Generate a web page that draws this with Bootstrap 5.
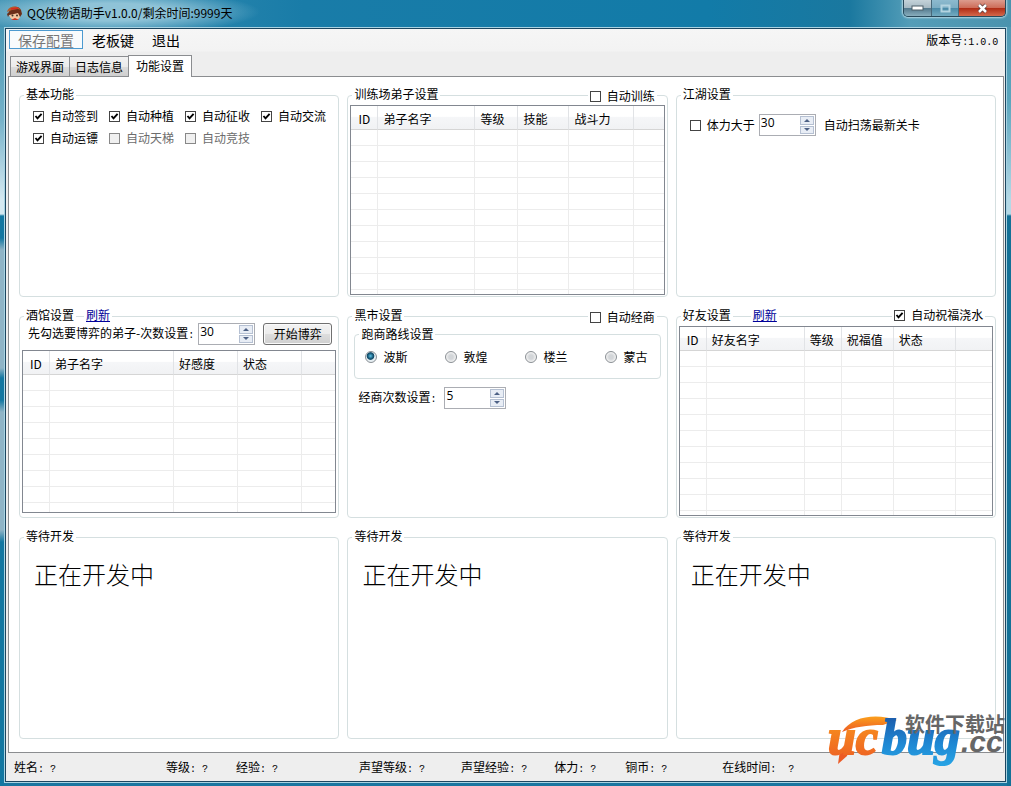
<!DOCTYPE html>
<html lang="zh-CN">
<head>
<meta charset="utf-8">
<meta name="viewport" content="width=device-width, initial-scale=1">
<title>QQ侠物语助手</title>
<link href="https://cdn.jsdelivr.net/npm/bootstrap@5.3.0/dist/css/bootstrap.min.css" rel="stylesheet">
<style>
body{font-family:"Noto Sans CJK SC",sans-serif;font-size:12px;line-height:16px;color:#000;background:#1a76a0}
.app-window{min-height:100vh;padding:0 4px 3px;
  background:
    linear-gradient(#5aa5c0,#4a98b5 30px,#76b2c9 120px,#d5e9f1 200px,#d5e9f1 214px,#1377a1 216px,#1377a1 238px,#8fb4c6 250px,#8fb4c6 368px,#1377a1 378px,#1377a1 400px,#8fb4c6 412px,#8fb4c6 530px,#1377a1 542px) left/4px 100% no-repeat,
    linear-gradient(#4d96b1,#5ba5bd 100px,#b4d8e6 200px,#b4d8e6 214px,#147197 216px) right/4px 100% no-repeat,
    #1a76a0}
.title-bar{height:27px;margin:0 -4px;padding-left:6px;
  background:radial-gradient(ellipse 150px 22px at 110px 12px,#8fc3d7 40%,transparent),linear-gradient(90deg,#3f92b3,#197ca8 30%,#127ba8 70%,#1a789f 84%,#539db8 90%,#4a93ae)}
.title-text{font-size:12px;font-family:"Noto Sans CJK SC",sans-serif;line-height:26px}
.win-buttons{height:17px;margin-right:5px;border:1px solid #28495a;border-top:0;border-radius:0 0 5px 5px;overflow:hidden;box-shadow:0 0 2px 1px #b9d9e4}
.win-buttons button{border:0;padding:0;width:27px;display:flex;align-items:center;justify-content:center;background:linear-gradient(#c4d2d9,#a6b9c3 50%,#53798d 52%,#89aebd)}
.win-buttons button+button{border-left:1px solid #48697a}
.win-buttons .btn-max{background:linear-gradient(#8dbace,#7aacc2 50%,#4b8ba8 52%,#73abc0)}
.win-buttons .btn-quit{width:47px;background:linear-gradient(#dc9c8e,#cd6b57 50%,#b02d16 52%,#d5684b)}
.frame-outer{border:1px solid #a9d3e2}
.frame-inner{border:1px solid #1c4660;background:linear-gradient(#f6f6f6,#f3f3f3 22px,#eee 23px)}
.menu-row{height:24px;padding:1px 7px 0 3px;font-size:14px;line-height:18px}
.menu-row button{border:1px solid transparent;background:none;height:19px;padding:0 8px;line-height:16px}
.menu-row button.hot{color:#777;border-color:#4c9ad0;background:#f8fbfd}
.version{font-size:12px;line-height:20px}
.half{font-family:"Liberation Mono",monospace;font-size:10px;white-space:pre}
.tab-row{height:23px;padding-left:4px}
.tab-row button{border:1px solid #8b8d90;border-bottom:0;height:20px;padding:0 5px;line-height:20px;background:linear-gradient(#f2f2f2,#ebebeb 50%,#dcdcdc 52%,#cfcfcf);margin-right:-1px}
.tab-row button.on{height:22px;background:#fff;padding:0 7px 2px;margin-bottom:-1px;position:relative;line-height:18px}
.page{margin:0 1px 0 2px;border:1px solid #8b8d90;background:#fff;padding:18px 7px 13px 10px;display:grid;grid-template-columns:repeat(3,minmax(0,1fr));grid-template-rows:repeat(3,minmax(180px,1fr));gap:19px 8px}
.group-box{border:1px solid #d5dfe0;border-radius:4px;display:flex;flex-direction:column;min-width:0}
.group-head{height:16px;margin-top:-10px;padding:0 10px 0 4px;display:flex;align-items:center;flex:none}
.group-head>*{background:#fff;padding:0 2px}
.group-head h2{font-size:12px;line-height:16px;margin:0;font-weight:400}
.group-head a{margin-left:8px}
.group-head a.far{margin-left:18px}
a{color:#000098}
label{display:flex;align-items:center;gap:6px;white-space:nowrap}
label.plain{display:block}
input[type=checkbox]{appearance:none;width:11px;height:11px;border:1px solid #444;background:#fff;margin:0;flex:none}
input[type=checkbox]:checked{background:#fff url("data:image/svg+xml,%3Csvg xmlns='http://www.w3.org/2000/svg' viewBox='0 0 9 9'%3E%3Cpath d='M1.5 4l2 2.3L7.6 1.8' fill='none' stroke='%23000' stroke-width='1.9'/%3E%3C/svg%3E")}
input[type=checkbox]:disabled{border-color:#888;background:#f0f0f0}
label.off{color:#6d6d6d}
.check-grid{display:grid;grid-template-columns:repeat(4,76px);grid-auto-rows:22px;padding:3px 0 0 13px}
input[type=radio]{appearance:none;width:12px;height:12px;border:1px solid #8a8f94;border-radius:50%;margin:0;flex:none;background:radial-gradient(circle,#d3d6d9 30%,#f3f3f3 70%)}
input[type=radio]:checked{background:radial-gradient(circle at 45% 40%,#5cc4e8,#14506e 35%,#14506e 42%,#e6eef2 52%)}
.stamina-row{padding:12px 0 0 13px;gap:4px}
.bet-row{padding:0 0 0 8px;gap:4px}
.trade-row{padding:8px 0 0 10px;gap:8px}
.spin-box{width:57px;height:22px;border:1px solid #abadb3;background:#fff;display:flex;padding:1px}
.spin-box.wide{width:62px}
.spin-box input{flex:1;min-width:0;border:0;padding:0;height:14px;font:12px/14px "Open Sans",sans-serif}
.spin-box span{display:flex;flex-direction:column;gap:1px;width:14px}
.spin-box button{flex:1;border:1px solid #b5c0d2;background:#e8edf5;padding:0;display:flex;align-items:center;justify-content:center}
.push-btn{height:22px;width:69px;border:1px solid #707070;border-radius:3px;padding:0;margin-left:4px;background:linear-gradient(#f3f3f3,#ebebeb 50%,#ddd 52%,#cfcfcf);box-shadow:inset 0 0 0 1px #fafafa}
.list-view{flex:1 1 0;min-height:0;overflow:hidden;border:1px solid #828790;margin:3px 2px 1px}
.list-view.short{margin:5px 2px 4px}
.list-view table{width:100%;table-layout:fixed;border-collapse:separate;border-spacing:0}
.list-view th{font-weight:400;height:24px;padding:2px 0 0 5px;border-right:1px solid #e1e3e6;border-bottom:1px solid #d5d5d5;background:linear-gradient(#fff 45%,#f5f6f8 50%,#f1f2f4);white-space:nowrap}
.list-view th:first-child{padding-left:7px}
.list-view td{height:16px;padding:0;border-right:1px solid #ececec;border-bottom:1px solid #ececec}
.list-view th:last-child,.list-view td:last-child{border-right:0}
.route-box{border:1px solid #d5dfe0;border-radius:4px;margin:3px 6px 0;padding:0 0 13px 10px;min-width:0}
.route-box legend{float:none;width:auto;font-size:12px;line-height:16px;margin:0 0 7px -6px;padding:0 2px}
.route-grid{display:grid;grid-template-columns:repeat(4,80px)}
.todo{font-size:24px;line-height:30px;font-weight:300;margin:15px 0 0 14px}
.status-row{height:28px;padding:3px 0 0 8px;display:grid;grid-template-columns:152fr 70fr 123fr 102fr 93fr 71fr 97fr 283fr;align-items:center;white-space:nowrap}
.site-logo{position:absolute;right:0;bottom:4px;pointer-events:none}
</style>
</head>
<body>
<div class="app-window d-flex flex-column position-relative">
  <header class="title-bar d-flex align-items-start justify-content-between">
    <div class="d-flex align-items-center">
      <svg class="me-1" width="17" height="16" viewBox="0 0 17 16" aria-hidden="true">
        <path d="M3 8c0 4 2 7 6 7s6-3 5-7z" fill="#f3c6a0"/>
        <path d="M3 7c1-5 9-8 12-2l1 4-2 3-2-4-4 1-5 1-1 2-1-3z" fill="#6b2e18"/>
        <path d="M1 7C2 1 11-1 15 5l-3-1-6 1z" fill="#b45c2c"/>
        <path d="M5 4l7-1" stroke="#d92a20" stroke-width="1.4"/>
        <circle cx="6.500" cy="10.500" r="1" fill="#432"/><circle cx="11" cy="10.500" r="1" fill="#432"/>
        <path d="M5 15l4-2 4 2z" fill="#c8321e"/>
      </svg>
      <span class="title-text">QQ侠物语助手v1.0.0/剩余时间:9999天</span>
    </div>
    <div class="win-buttons d-flex">
      <button aria-label="最小化"><svg width="13" height="6"><rect x="1" y="1" width="11" height="4" fill="#fff" stroke="#4d5f69"/></svg></button>
      <button class="btn-max" aria-label="最大化"><svg width="11" height="9"><path d="M1.500 1.500h8v6h-8z" fill="none" stroke="#b3d3e0" stroke-width="2"/></svg></button>
      <button class="btn-quit" aria-label="关闭"><svg width="13" height="11" viewBox="0 0 13 11"><path d="M3 2l7 7M10 2L3 9" stroke="#5b3a3a" stroke-width="4"/><path d="M3 2l7 7M10 2L3 9" stroke="#fff" stroke-width="2.500"/></svg></button>
    </div>
  </header>

  <div class="frame-outer flex-grow-1 d-flex">
  <div class="frame-inner flex-grow-1 d-flex flex-column">
    <nav class="menu-row d-flex align-items-start justify-content-between">
      <div class="d-flex"><button class="hot">保存配置</button><button>老板键</button><button>退出</button></div>
      <div class="version">版本号<span class="half">:1.0.0</span></div>
    </nav>
    <div class="tab-row d-flex align-items-end" role="tablist">
      <button role="tab">游戏界面</button><button role="tab">日志信息</button><button role="tab" class="on" aria-selected="true">功能设置</button>
    </div>

    <main class="page flex-grow-1">
      <section class="group-box">
        <div class="group-head"><h2>基本功能</h2></div>
        <div class="check-grid">
          <label><input type="checkbox" checked>自动签到</label>
          <label><input type="checkbox" checked>自动种植</label>
          <label><input type="checkbox" checked>自动征收</label>
          <label><input type="checkbox" checked>自动交流</label>
          <label><input type="checkbox" checked>自动运镖</label>
          <label class="off"><input type="checkbox" disabled>自动天梯</label>
          <label class="off"><input type="checkbox" disabled>自动竞技</label>
        </div>
      </section>

      <section class="group-box">
        <div class="group-head"><h2>训练场弟子设置</h2><label class="ms-auto mt-1"><input type="checkbox">自动训练</label></div>
        <div class="list-view"><table>
          <colgroup><col width="27"><col width="97"><col width="43"><col width="51"><col width="65"><col></colgroup>
          <thead><tr><th>ID</th><th>弟子名字</th><th>等级</th><th>技能</th><th>战斗力</th><th></th></tr></thead><tbody></tbody>
        </table></div>
      </section>

      <section class="group-box">
        <div class="group-head"><h2>江湖设置</h2></div>
        <div class="stamina-row d-flex align-items-center">
          <label><input type="checkbox">体力大于</label>
          <div class="spin-box me-1"><input type="text" value="30" aria-label="体力"><span></span></div>
          <span>自动扫荡最新关卡</span>
        </div>
      </section>

      <section class="group-box">
        <div class="group-head"><h2>酒馆设置</h2><a href="#">刷新</a></div>
        <div class="bet-row d-flex align-items-center">
          <label for="bet-count" class="plain">先勾选要博弈的弟子-次数设置<span class="half">:</span></label>
          <div class="spin-box"><input id="bet-count" type="text" value="30"><span></span></div>
          <button class="push-btn">开始博弈</button>
        </div>
        <div class="list-view short"><table>
          <colgroup><col width="27"><col width="124"><col width="64"><col width="64"><col></colgroup>
          <thead><tr><th>ID</th><th>弟子名字</th><th>好感度</th><th>状态</th><th></th></tr></thead><tbody></tbody>
        </table></div>
      </section>

      <section class="group-box">
        <div class="group-head"><h2>黑市设置</h2><label class="ms-auto mt-1"><input type="checkbox">自动经商</label></div>
        <fieldset class="route-box">
          <legend>跑商路线设置</legend>
          <div class="route-grid">
            <label><input type="radio" name="route" checked>波斯</label>
            <label><input type="radio" name="route">敦煌</label>
            <label><input type="radio" name="route">楼兰</label>
            <label><input type="radio" name="route">蒙古</label>
          </div>
        </fieldset>
        <div class="trade-row d-flex align-items-center">
          <label for="trade-count" class="plain">经商次数设置<span class="half">:</span></label>
          <div class="spin-box wide"><input id="trade-count" type="text" value="5"><span></span></div>
        </div>
      </section>

      <section class="group-box">
        <div class="group-head"><h2>好友设置</h2><a href="#" class="far">刷新</a><label class="ms-auto"><input type="checkbox" checked>自动祝福浇水</label></div>
        <div class="list-view"><table>
          <colgroup><col width="27"><col width="98"><col width="37"><col width="52"><col width="62"><col></colgroup>
          <thead><tr><th>ID</th><th>好友名字</th><th>等级</th><th>祝福值</th><th>状态</th><th></th></tr></thead><tbody></tbody>
        </table></div>
      </section>

      <section class="group-box"><div class="group-head"><h2>等待开发</h2></div><p class="todo">正在开发中</p></section>
      <section class="group-box"><div class="group-head"><h2>等待开发</h2></div><p class="todo">正在开发中</p></section>
      <section class="group-box"><div class="group-head"><h2>等待开发</h2></div><p class="todo">正在开发中</p></section>
    </main>

    <footer class="status-row">
      <span>姓名<span class="half">: ?</span></span><span>等级<span class="half">: ?</span></span><span>经验<span class="half">: ?</span></span><span>声望等级<span class="half">: ?</span></span><span>声望经验<span class="half">: ?</span></span><span>体力<span class="half">: ?</span></span><span>铜币<span class="half">: ?</span></span><span>在线时间<span class="half">:  ?</span></span>
    </footer>
  </div>
  </div>

  <svg class="site-logo" width="191" height="84" viewBox="-6 -14 191 84" role="img" aria-label="ucbug.cc 软件下载站">
    <defs>
      <linearGradient id="warm" x1="0" y1="0" x2="0" y2="1"><stop offset="0" stop-color="#fba01c"/><stop offset="1" stop-color="#ec5a24"/></linearGradient>
      <linearGradient id="cool" x1="0" y1="0" x2="0" y2="1"><stop offset="0" stop-color="#1c4f9f"/><stop offset=".6" stop-color="#1e86d2"/><stop offset="1" stop-color="#27a3e4"/></linearGradient>
    </defs>
    <path d="M16 20C26 4 50 1 71 8L57 13C41 13 28 15 16 20z" fill="url(#warm)"/>
    <path d="M14 38h9l-2 6-9 8z" fill="#ec5a24"/>
    <g font-family="Liberation Serif" font-weight="700" font-style="italic" font-size="50" stroke-width="2">
      <text x="2" y="42" fill="url(#warm)" stroke="url(#warm)">uc</text>
      <text x="56" y="42" fill="url(#cool)" stroke="url(#cool)">bug</text>
    </g>
    <text x="135" y="40" font-family="Liberation Sans" font-weight="700" font-style="italic" font-size="30" fill="#666">.cc</text>
    <text x="79" y="20" font-family="Noto Sans CJK SC" font-weight="700" font-size="20" fill="#666">软件下载站</text>
  </svg>
</div>
<script>
// blank rows of the list views
document.querySelectorAll('.list-view table').forEach(function (t) {
  var n = t.querySelectorAll('th').length;
  t.tBodies[0].innerHTML = ('<tr>' + '<td></td>'.repeat(n) + '</tr>').repeat(11);
});
// arrows of the number boxes
document.querySelectorAll('.spin-box span').forEach(function (s) {
  s.innerHTML = '<button aria-label="增加"><svg width="6" height="3"><path d="M0 3L3 0 6 3z" fill="#4d6185"/></svg></button>' +
    '<button aria-label="减少"><svg width="6" height="3"><path d="M0 0h6L3 3z" fill="#4d6185"/></svg></button>';
});
</script>
<script src="https://cdn.jsdelivr.net/npm/bootstrap@5.3.0/dist/js/bootstrap.bundle.min.js"></script>
</body>
</html>
